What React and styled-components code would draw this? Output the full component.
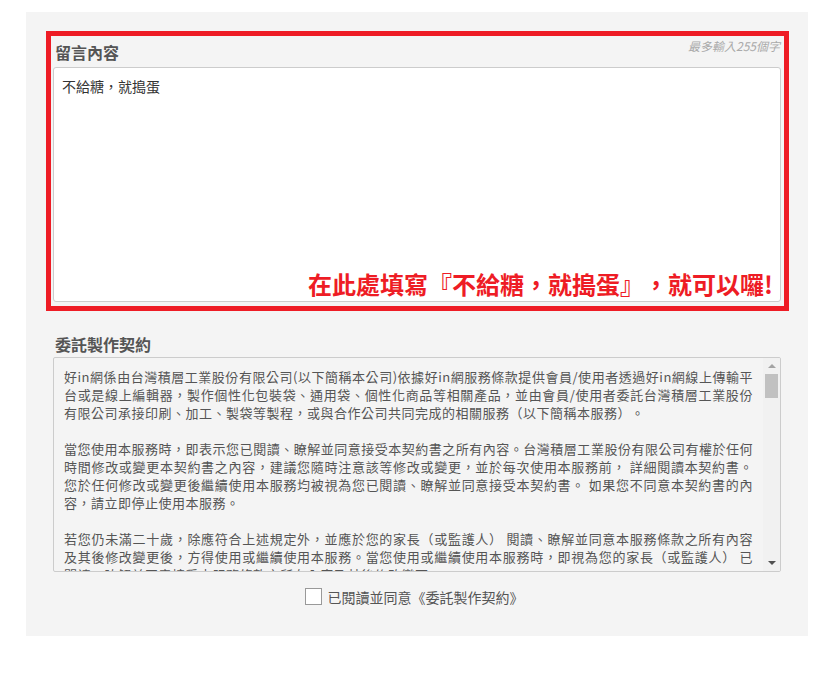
import React, { useState } from 'react'
import styled, { createGlobalStyle } from 'styled-components'

const GlobalStyle = createGlobalStyle`
  body {
    margin: 0;
    background: #fff;
    font-family: "Noto Sans CJK TC", "Noto Sans", sans-serif;
    text-spacing-trim: space-all;
  }
`

const Page = styled.div`
  padding: 12px 0 0 26px;
`

const Panel = styled.section`
  width: 782px;
  box-sizing: border-box;
  background: #f4f4f4;
  padding: 19px 19px 31px 20px;
`

// red annotation frame round the message field
const MessageFrame = styled.div`
  border: 5px solid #ee1c25;
  padding: 0 3px 4px 2px;
`

const MessageHeader = styled.div`
  display: flex;
  justify-content: space-between;
  align-items: flex-start;
  height: 31px;
  padding: 0 1px 0 2px;
`

const Label = styled.h3`
  margin: 6px 0 0;
  font-size: 16px;
  line-height: 20px;
  font-weight: 700;
  color: #555;
`

const Counter = styled.span`
  margin-top: 3px;
  font-size: 12px;
  line-height: 14px;
  font-style: italic;
  color: #aaa;
`

const InputWrap = styled.div`
  position: relative;
`

const MessageInput = styled.textarea`
  display: block;
  width: 100%;
  height: 235px;
  box-sizing: border-box;
  border: 1px solid #ccc;
  border-radius: 3px;
  padding: 8px;
  font-family: inherit;
  font-size: 14px;
  line-height: 20px;
  color: #333;
  background: #fff;
  resize: none;
  outline: none;
`

const Hint = styled.div`
  position: absolute;
  right: 8px;
  bottom: 6px;
  font-size: 24px;
  line-height: 24px;
  font-weight: 700;
  color: #ee1c25;
  pointer-events: none;
`

const AgreementSection = styled.div`
  padding: 23px 8px 0 7px;
`

const SectionTitle = styled.h3`
  margin: 0 0 3px 2px;
  font-size: 16px;
  line-height: 20px;
  font-weight: 700;
  color: #555;
`

const TermsFrame = styled.div`
  display: flex;
  height: 215px;
  box-sizing: border-box;
  border: 1px solid #ccc;
  border-radius: 2px;
  overflow: hidden;
`

const TermsText = styled.div`
  flex: 1;
  overflow: hidden;
  padding: 10px;
  font-size: 13px;
  letter-spacing: 0.5px;
  line-height: 18px;
  color: #555;
  text-align: justify;
`

const Para = styled.p`
  margin: 0 0 18px;
`

const ScrollRail = styled.div`
  width: 17px;
  flex: none;
  display: flex;
  flex-direction: column;
  background: #f1f1f1;
`

const RailButton = styled.div`
  height: 16px;
  display: flex;
  align-items: center;
  justify-content: center;

  &::before {
    content: '';
    border-left: 4px solid transparent;
    border-right: 4px solid transparent;
    ${(p) =>
      p.$down
        ? 'border-top: 4px solid #505050;'
        : 'border-bottom: 4px solid #a3a3a3;'}
  }
`

const Thumb = styled.div`
  height: 24px;
  margin: 0 2px;
  background: #c1c1c1;
`

const Track = styled.div`
  flex: 1;
`

const AgreeRow = styled.label`
  display: flex;
  justify-content: center;
  align-items: center;
  gap: 6px;
  margin-top: 16px;
  padding-right: 6px;
  height: 17px;
  font-size: 14px;
  color: #555;
  cursor: pointer;
`

const Check = styled.input`
  appearance: none;
  margin: 0;
  width: 17px;
  height: 17px;
  box-sizing: border-box;
  border: 1px solid #999;
  background: #fff;
  cursor: pointer;

  &:checked {
    background: #ee1c25;
    border-color: #ee1c25;
  }
`

const terms = [
  '好in網係由台灣積層工業股份有限公司(以下簡稱本公司)依據好in網服務條款提供會員/使用者透過好in網線上傳輸平台或是線上編輯器，製作個性化包裝袋、通用袋、個性化商品等相關產品，並由會員/使用者委託台灣積層工業股份有限公司承接印刷、加工、製袋等製程，或與合作公司共同完成的相關服務（以下簡稱本服務）。',
  '當您使用本服務時，即表示您已閱讀、瞭解並同意接受本契約書之所有內容。台灣積層工業股份有限公司有權於任何時間修改或變更本契約書之內容，建議您隨時注意該等修改或變更，並於每次使用本服務前， 詳細閱讀本契約書。您於任何修改或變更後繼續使用本服務均被視為您已閱讀、瞭解並同意接受本契約書。 如果您不同意本契約書的內容，請立即停止使用本服務。',
  '若您仍未滿二十歲，除應符合上述規定外，並應於您的家長（或監護人） 閱讀、瞭解並同意本服務條款之所有內容及其後修改變更後，方得使用或繼續使用本服務。當您使用或繼續使用本服務時，即視為您的家長（或監護人） 已閱讀、瞭解並同意接受本服務條款之所有內容及其後修改變更。',
  '會員/使用者應確認上傳之圖檔、文字及設計內容均為本人所有或已取得合法授權，不得侵害任何第三人之著作權、商標權、專利權、肖像權或其他智慧財產權。',
]

const App = () => {
  const [message, setMessage] = useState('不給糖，就搗蛋')
  const [agreed, setAgreed] = useState(false)

  return (
    <Page>
      <GlobalStyle />
      <Panel>
        <MessageFrame>
          <MessageHeader>
            <Label>留言內容</Label>
            <Counter>最多輸入255個字</Counter>
          </MessageHeader>
          <InputWrap>
            <MessageInput
              maxLength={255}
              value={message}
              onChange={(e) => setMessage(e.target.value)}
            />
            <Hint>在此處填寫『不給糖，就搗蛋』，就可以囉!</Hint>
          </InputWrap>
        </MessageFrame>

        <AgreementSection>
          <SectionTitle>委託製作契約</SectionTitle>
          <TermsFrame>
            <TermsText>
              {terms.map((t, i) => (
                <Para key={i}>{t}</Para>
              ))}
            </TermsText>
            <ScrollRail>
              <RailButton />
              <Thumb />
              <Track />
              <RailButton $down />
            </ScrollRail>
          </TermsFrame>
          <AgreeRow>
            <Check
              type="checkbox"
              checked={agreed}
              onChange={(e) => setAgreed(e.target.checked)}
            />
            已閱讀並同意《委託製作契約》
          </AgreeRow>
        </AgreementSection>
      </Panel>
    </Page>
  )
}

export default App
